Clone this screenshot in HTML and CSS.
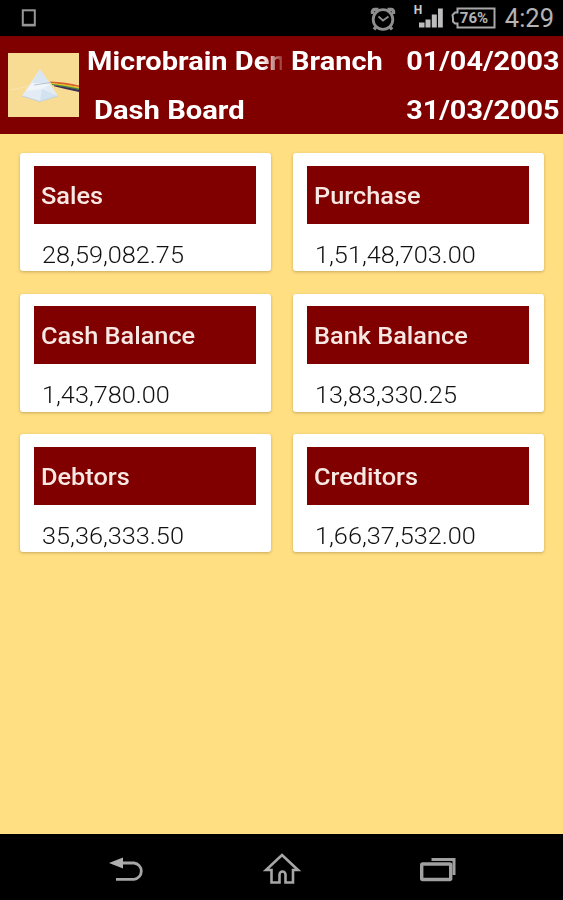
FILE: index.html
```html
<!DOCTYPE html>
<html lang="en">

<head>
  <meta charset="UTF-8">
  <meta name="viewport" content="width=device-width, initial-scale=1.0">
  <title>Dash Board</title>
  <link rel="stylesheet" href="styles.css">
</head>

<body>
  <div class="statusbar">
    <svg class="notification" width="16" height="20" viewBox="0 0 16 20">
      <rect x="1.8" y="2.3" width="12" height="15" fill="none" stroke="#969696" stroke-width="2"/>
      <path d="M2 17h12" stroke="#969696" stroke-width="2.4"/>
    </svg>
    <div class="status-icons">
      <svg class="alarm" width="26" height="24" viewBox="0 0 26 24" fill="none" stroke="#8e8e8e">
        <circle cx="13" cy="12.5" r="9.8" stroke-width="2.8"/>
        <path d="M2.500 7V4.500a2 2 0 0 1 2-2h4M23.500 7V4.500a2 2 0 0 0-2-2h-4M6 20l-2 2.500M20 20l2 2.500" stroke-width="3.4"/>
        <path d="M8.500 9.500l4.500 4 5.500-4" stroke-width="1.8"/>
      </svg>
      <div class="signal">
        <span class="network">H</span>
        <svg width="28" height="20" viewBox="0 0 28 20" fill="#bdbdbd">
          <rect x="0" y="14.500" width="5.500" height="5"/>
          <rect x="6.500" y="11.500" width="5" height="8"/>
          <rect x="12.800" y="6.500" width="5" height="13"/>
          <rect x="19" y="0.500" width="4.800" height="19"/>
        </svg>
      </div>
      <div class="battery">
        <svg width="46" height="22" viewBox="0 0 46 22" fill="none" stroke="#a8a8a8" stroke-width="2">
          <path d="M6.500 1.500H43.500V20.500H6.500V16.500H4L2 14.500V11L1.500 8L4 5.500H6.500Z"/>
        </svg>
        <span class="percent">76%</span>
      </div>
      <span class="clock">4:29</span>
    </div>
  </div>

  <header class="header">
    <svg class="logo" width="71" height="64" viewBox="0 0 71 64">
      <rect width="71" height="64" fill="#f9dc94"/>
      <path d="M3 37L26 32" stroke="#fae5b0" stroke-width="1"/>
      <path d="M42 28.500Q58 29 71 32.500V34Q56 31.500 42 30Z" fill="#d5602a"/>
      <path d="M43 30Q58 31 71 34V35.500Q56 33 43 31.200Z" fill="#e5c02c"/>
      <path d="M44 31Q58 32.500 71 35.500V37Q57 34.500 44 32Z" fill="#3f8b3e"/>
      <path d="M46 32.200Q58 34 71 36.800V39Q57 36 46 33.200Z" fill="#3b2c55"/>
      <path d="M32 16L14 43 32 48.500 50 43Z" fill="#e3ecf4"/>
      <path d="M32 16L24 30 42 31Z" fill="#d9e6f1"/>
      <path d="M24 30L42 31 34 36 18 38Z" fill="#eff5fa"/>
      <path d="M34 36L50 43 32 48.500Z" fill="#d3e2f1"/>
      <path d="M26 32L43 29.500" stroke="#b8c4ce" stroke-width="1"/>
      <path d="M14 43L32 48.500 50 43" fill="none" stroke="#c3d2dc" stroke-width="1"/>
    </svg>
    <div class="titles">
      <div class="title-row">
        <span class="company">Microbrain Dem</span>
        <span class="branch">Branch</span>
        <span class="date">01/04/2003</span>
      </div>
      <div class="title-row">
        <span class="page-name">Dash Board</span>
        <span class="date">31/03/2005</span>
      </div>
    </div>
  </header>

  <main class="cards">
    <div class="card">
      <h2><span>Sales</span></h2>
      <p>28,59,082.75</p>
    </div>
    <div class="card">
      <h2><span>Purchase</span></h2>
      <p>1,51,48,703.00</p>
    </div>
    <div class="card">
      <h2><span>Cash Balance</span></h2>
      <p>1,43,780.00</p>
    </div>
    <div class="card">
      <h2><span>Bank Balance</span></h2>
      <p>13,83,330.25</p>
    </div>
    <div class="card">
      <h2><span>Debtors</span></h2>
      <p>35,36,333.50</p>
    </div>
    <div class="card">
      <h2><span>Creditors</span></h2>
      <p>1,66,37,532.00</p>
    </div>
  </main>

  <nav class="navbar">
    <svg width="38" height="32" viewBox="0 0 38 32">
      <path d="M13 10H27a8.200 8.200 0 0 1 0 16.300H9" fill="none" stroke="#a6a6a6" stroke-width="2.800"/>
      <path d="M2 10L16 4.500V15.500Z" fill="#b0b0b0"/>
    </svg>
    <svg width="38" height="32" viewBox="0 0 38 32">
      <path d="M19 2L35 17H30V29.500H22.500V21.500a3 3 0 0 0-6 0V29.500H8.500V17H3Z" fill="none" stroke="#a6a6a6" stroke-width="2.600"/>
    </svg>
    <svg width="38" height="28" viewBox="0 0 38 28">
      <rect x="2.700" y="9" width="29" height="15.500" rx="1" fill="none" stroke="#a0a0a0" stroke-width="3.400"/>
      <path d="M12.500 4.500H35V20" fill="none" stroke="#a0a0a0" stroke-width="3"/>
    </svg>
  </nav>
</body>

</html>
```

FILE: styles.css
```css
body {
  margin: 0;
  height: 900px;
  display: flex;
  flex-direction: column;
  background-color: #ffdf82;
  font-family: Roboto, sans-serif;
  overflow: hidden;
}

.statusbar {
  height: 36px;
  flex: none;
  display: flex;
  justify-content: space-between;
  align-items: center;
  padding: 0 9px 0 21px;
  background-color: #000;
}

.status-icons {
  display: flex;
  align-items: center;
}

.alarm {
  margin: 1px 23px 0 0;
}

.signal {
  position: relative;
  width: 32px;
  height: 20px;
}

.network {
  position: absolute;
  left: -5px;
  top: -4px;
  font-size: 12px;
  line-height: 12px;
  font-weight: bold;
  color: #ccc;
}

.battery {
  position: relative;
  width: 46px;
  height: 22px;
  margin-right: 8px;
}

.percent {
  position: absolute;
  left: 9px;
  top: 3px;
  font-size: 15px;
  line-height: 17px;
  font-weight: bold;
  color: #b4b4b4;
}

.clock {
  font-size: 25.500px;
  line-height: 30px;
  color: #b4b4b4;
}

.header {
  height: 98px;
  flex: none;
  display: flex;
  padding: 0 3px 0 8px;
  box-sizing: border-box;
  background-color: #800000;
  color: #fff;
}

.logo {
  flex: none;
  margin: 17px 7px 0 0;
}

.titles {
  flex: 1;
}

.title-row {
  display: flex;
  height: 49px;
  font-size: 26px;
  line-height: 51px;
  font-weight: bold;
  white-space: nowrap;
}

.title-row span {
  transform: scaleX(1.115);
  transform-origin: left;
}

.title-row .company {
  width: 175px;
  margin: 0 29px 0 1px;
  overflow: hidden;
  -webkit-mask-image: linear-gradient(to right, #000 157px, transparent 180px);
  mask-image: linear-gradient(to right, #000 157px, transparent 180px);
}

.title-row .page-name {
  margin-left: 8px;
  transform: scaleX(1.122);
}

.title-row .date {
  margin-left: auto;
  transform: scaleX(1.107);
  transform-origin: right;
}

.cards {
  flex: 1;
  display: grid;
  grid-template-columns: 251px 251px;
  grid-auto-rows: 118px;
  gap: 22.500px 22px;
  padding: 19px 0 0 20px;
}

.card {
  padding: 12.500px 15px 0 14px;
  box-sizing: border-box;
  background-color: #fff;
  border-radius: 3px;
  box-shadow: 0 1px 3px rgba(90, 70, 20, 0.35);
}

.card h2 {
  margin: 0;
  padding-left: 7px;
  font-size: 24px;
  line-height: 60px;
  height: 58px;
  font-weight: 500;
  background-color: #800000;
  color: #f8e8e4;
}

.card h2 span {
  display: inline-block;
  transform: scaleX(1.055);
  transform-origin: left;
}

.card p {
  margin: 16px 0 0 7.500px;
  font-size: 24px;
  line-height: 30px;
  font-weight: 300;
  color: #111;
  transform: scaleX(1.053);
  transform-origin: left;
}

.navbar {
  height: 66px;
  flex: none;
  display: flex;
  align-items: center;
  justify-content: center;
  gap: 118px;
  padding-top: 4px;
  box-sizing: border-box;
  background-color: #000;
}
```
